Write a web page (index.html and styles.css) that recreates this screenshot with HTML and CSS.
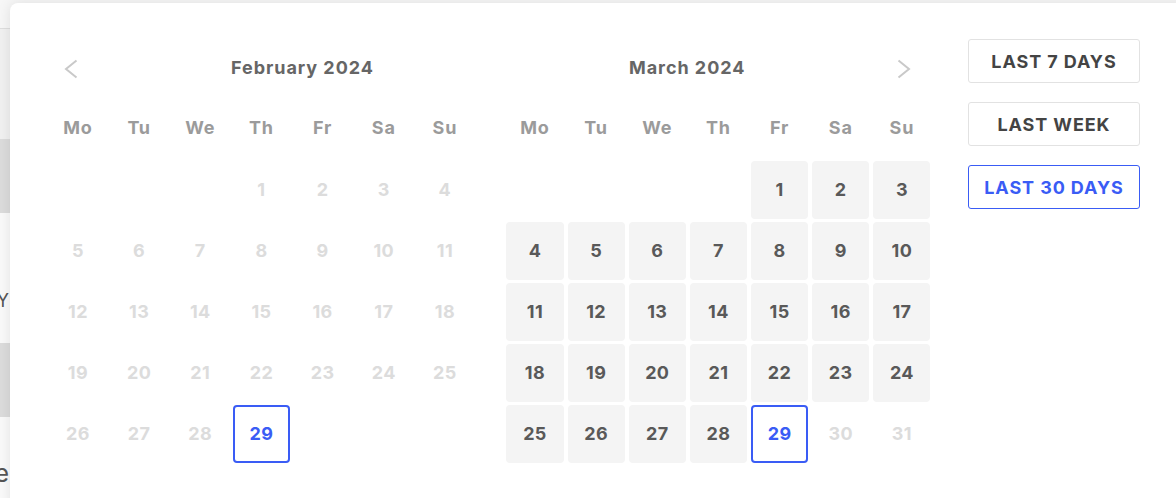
FILE: index.html
```html
<!DOCTYPE html>
<html lang="en">

<head>
    <meta charset="UTF-8">
    <title>Date range picker</title>
    <link rel="stylesheet" href="styles.css">
</head>

<body>
    <div class="backdrop">
        <div class="topbar"></div>
        <div class="band band-light"></div>
        <div class="band band-grey"></div>
        <div class="band band-text"><span class="peek">TODAY</span></div>
        <div class="band band-grey"></div>
        <div class="band band-tail"><span class="peek peek-big">Date</span></div>
    </div>

    <div class="popup">
        <div class="months">
            <div class="month">
                <div class="head head-prev">
                    <svg class="chev" width="14" height="20" viewBox="0 0 14 20"><path d="M12.5 1.5 L2 10 L12.5 18.5" /></svg>
                    <span class="title">February 2024</span>
                </div>
                <div class="weekdays">
                    <span>Mo</span><span>Tu</span><span>We</span><span>Th</span><span>Fr</span><span>Sa</span><span>Su</span>
                </div>
                <div class="days">
                    <span></span><span></span><span></span>
                    <span class="day off">1</span><span class="day off">2</span><span class="day off">3</span><span class="day off">4</span>
                    <span class="day off">5</span><span class="day off">6</span><span class="day off">7</span><span class="day off">8</span><span class="day off">9</span><span class="day off">10</span><span class="day off">11</span>
                    <span class="day off">12</span><span class="day off">13</span><span class="day off">14</span><span class="day off">15</span><span class="day off">16</span><span class="day off">17</span><span class="day off">18</span>
                    <span class="day off">19</span><span class="day off">20</span><span class="day off">21</span><span class="day off">22</span><span class="day off">23</span><span class="day off">24</span><span class="day off">25</span>
                    <span class="day off">26</span><span class="day off">27</span><span class="day off">28</span><span class="day sel">29</span>
                </div>
            </div>

            <div class="month">
                <div class="head head-next">
                    <span class="title">March 2024</span>
                    <svg class="chev" width="14" height="20" viewBox="0 0 14 20"><path d="M1.5 1.5 L12 10 L1.5 18.5" /></svg>
                </div>
                <div class="weekdays">
                    <span>Mo</span><span>Tu</span><span>We</span><span>Th</span><span>Fr</span><span>Sa</span><span>Su</span>
                </div>
                <div class="days">
                    <span></span><span></span><span></span><span></span>
                    <span class="day on">1</span><span class="day on">2</span><span class="day on">3</span>
                    <span class="day on">4</span><span class="day on">5</span><span class="day on">6</span><span class="day on">7</span><span class="day on">8</span><span class="day on">9</span><span class="day on">10</span>
                    <span class="day on">11</span><span class="day on">12</span><span class="day on">13</span><span class="day on">14</span><span class="day on">15</span><span class="day on">16</span><span class="day on">17</span>
                    <span class="day on">18</span><span class="day on">19</span><span class="day on">20</span><span class="day on">21</span><span class="day on">22</span><span class="day on">23</span><span class="day on">24</span>
                    <span class="day on">25</span><span class="day on">26</span><span class="day on">27</span><span class="day on">28</span><span class="day sel">29</span><span class="day off">30</span><span class="day off">31</span>
                </div>
            </div>
        </div>

        <div class="presets">
            <button class="preset">LAST 7 DAYS</button>
            <button class="preset">LAST WEEK</button>
            <button class="preset active">LAST 30 DAYS</button>
        </div>
    </div>
</body>
</html>
```

FILE: styles.css
```css
body {
    margin: 0;
    width: 1176px;
    height: 498px;
    overflow: hidden;
    position: relative;
    background-color: #fafafa;
    font-family: Inter, "Noto Sans", sans-serif;
}

/* page behind the popup, only its left edge shows */
.backdrop {
    display: flex;
    flex-direction: column;
}

.topbar {
    height: 28px;
    background-color: #f7f7f7;
    border-bottom: 1px solid #dedede;
}

.band-light {
    height: 110px;
    background-color: #f1f1f1;
}

.band-grey {
    height: 74px;
    background-color: #dcdcdc;
}

.band-text {
    height: 130px;
    display: flex;
    align-items: center;
}

.band-tail {
    height: 82px;
    display: flex;
    align-items: flex-start;
    padding-top: 41px;
    box-sizing: border-box;
}

.peek {
    width: 9px;
    display: flex;
    justify-content: flex-end;
    white-space: nowrap;
    color: #555;
    font-size: 18px;
    margin-top: 44px;
}

.peek-big {
    font-size: 25px;
    margin-top: 0;
}

.popup {
    position: absolute;
    left: 10px;
    top: 3px;
    width: 1180px;
    height: 510px;
    box-sizing: border-box;
    padding: 36px 0 0 39.4px;
    display: flex;
    background-color: #fff;
    border-radius: 8px;
    box-shadow: 0 0 14px rgba(0, 0, 0, 0.1);
}

.months {
    display: flex;
    gap: 32.8px;
}

.month {
    width: 424.2px;
    padding-top: 8px;
}

.head {
    height: 40px;
    display: flex;
    align-items: center;
    font-size: 18px;
    font-weight: 700;
    letter-spacing: 0.95px;
    color: #666;
}

.head-prev {
    padding-left: 14.6px;
}

.head-prev .title {
    margin-left: 153px;
}

.head-next {
    padding-left: 122.6px;
    padding-right: 20px;
}

.head-next .chev {
    margin-left: auto;
}

.chev {
    margin-top: 4px;
}

.chev path {
    fill: none;
    stroke: #c9c9c9;
    stroke-width: 2;
}

.weekdays {
    display: grid;
    grid-template-columns: repeat(7, 57.17px);
    column-gap: 4px;
    height: 40px;
    margin-top: 20px;
    align-items: center;
    text-align: center;
    font-size: 18px;
    font-weight: 700;
    letter-spacing: 0.8px;
    color: #9b9b9b;
}

.days {
    display: grid;
    grid-template-columns: repeat(7, 57.17px);
    grid-auto-rows: 57.5px;
    gap: 3.5px 4px;
    margin-top: 14px;
}

.day {
    display: flex;
    align-items: center;
    justify-content: center;
    box-sizing: border-box;
    border-radius: 4px;
    font-size: 18px;
    font-weight: 700;
    letter-spacing: 0.4px;
}

.day.off {
    color: #dcdcdc;
}

.day.on {
    background-color: #f4f4f4;
    color: #595959;
}

.day.sel {
    border: 2px solid #3a5cf5;
    color: #3a5cf5;
}

.presets {
    display: flex;
    flex-direction: column;
    gap: 19px;
    margin-left: 37.4px;
    margin-top: 0;
}

.preset {
    width: 172px;
    height: 44px;
    background-color: #fff;
    border: 1px solid #e2e2e2;
    border-radius: 3px;
    font-family: Inter, "Noto Sans", sans-serif;
    font-size: 18px;
    font-weight: 700;
    letter-spacing: 0.9px;
    color: #444;
}

.preset.active {
    border-color: #3a5cf5;
    color: #3a5cf5;
}
```
